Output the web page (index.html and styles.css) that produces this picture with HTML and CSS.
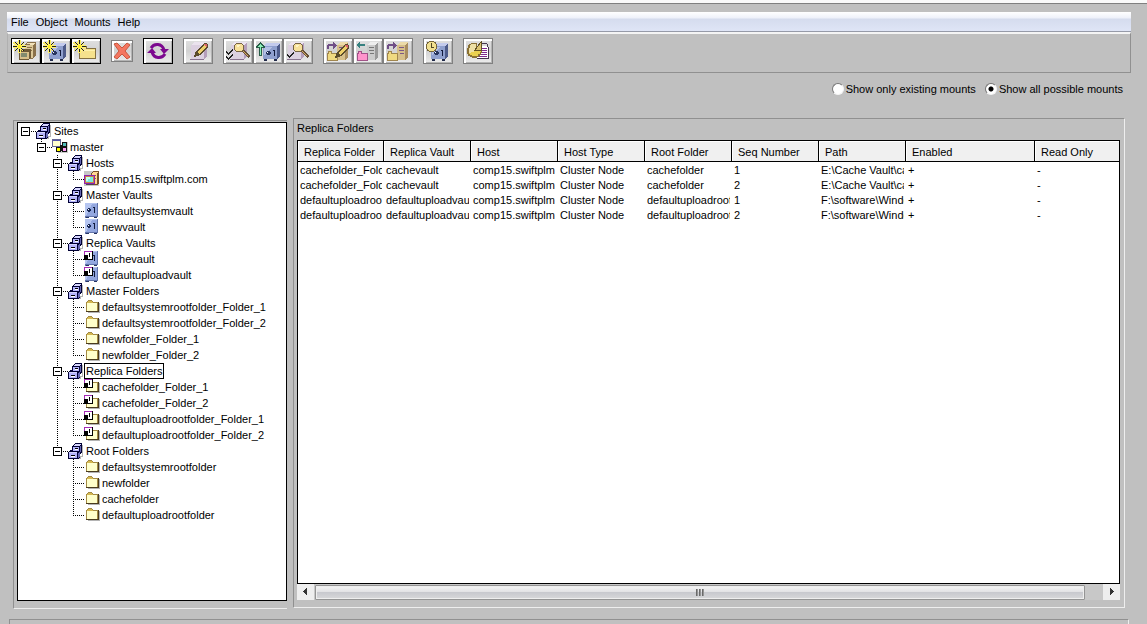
FILE: index.html
```html
<!DOCTYPE html>
<html lang="en">
<head>
<meta charset="utf-8">
<title>Sites and Mounts</title>
<link rel="stylesheet" href="styles.css">
</head>
<body>
<svg class="defs" aria-hidden="true">
  <defs>
    <symbol id="star" viewBox="0 0 13 13">
      <path d="M5 0h3v4h2v-2h1v2h-1v1h3v3h-4v1h1v1h1v1h-2v-1h-1v3h-3v-4h-1v1h-1v1h-2v-1h1v-1h1v-1h-4v-3h3v-1h-2v-2h2v1h1v1h1z" fill="#fff06a"/>
      <path d="M6 0h1v4h-1zM6 9h1v3h-1zM0 6h4v1h-4zM9 6h4v1h-4zM2 2h1v1h1v1h1v1h-1v-1h-1v-1h-1zM10 2h1v1h-1v1h-1v1h-1v-1h1v-1h1zM4 8h1v1h-1v1h-1v1h-1v-1h1v-1h1zM8 8h1v1h1v1h1v1h-1v-1h-1v-1h-1z" fill="#222"/>
      <path d="M5 5h3v3h-3z" fill="#ffee22"/>
    </symbol>
    <symbol id="safe" viewBox="0 0 17 18">
      <path d="M0 3L3 0H17L14 3Z" fill="#c3cbed"/><path d="M14 3L17 0V13L14 16Z" fill="#4d5b8a"/>
      <path d="M0 3H14V16H0Z" fill="#8fa0ce"/><path d="M1 4H9L1 13Z" fill="#b4c0e4"/>
      <path d="M1 16h3v2h-3zM11 16h3v2h-3z" fill="#222b4b"/>
      <path d="M4 8h3v1h1v2h-1v1h-3v-1h-1v-2h1z" fill="#27345d"/><path d="M4 9h1v1h-1z" fill="#fff"/>
      <path d="M10 7h2v6h-1v-5h-1z" fill="#111a3b"/>
    </symbol>
    <symbol id="bundle" viewBox="0 0 21 19">
      <path d="M10 3L13 0H21L18 3Z" fill="#ecdba9"/><path d="M10 3H18V18H10Z" fill="#d7c08b"/><path d="M18 3L21 0V15L18 18Z" fill="#a98d60"/>
      <path d="M12 5h5v1h-5zM12 8h5v1h-5zM13 11h4v1h-4z" fill="#7c5886"/>
      <path d="M0 11h1v-2h4v2h6v8h-11z" fill="#a1864e"/><path d="M1 12h9v6h-9zM2 10h2v2h-2z" fill="#f0da81"/>
    </symbol>
    <symbol id="bundle-gray" viewBox="0 0 21 19">
      <path d="M10 3L13 0H21L18 3Z" fill="#eee"/><path d="M10 3H18V18H10Z" fill="#ccc"/><path d="M18 3L21 0V15L18 18Z" fill="#999"/>
      <path d="M12 5h5v1h-5zM12 8h5v1h-5zM13 11h4v1h-4z" fill="#777"/>
      <path d="M0 11h1v-2h4v2h6v8h-11z" fill="#a15388"/><path d="M1 12h9v6h-9zM2 10h2v2h-2z" fill="#ff94cc"/>
    </symbol>
    <symbol id="arrow" viewBox="0 0 10 8"><path d="M0 3h1v-1h5v-2h1v1h1v1h1v1h1v1h-1v1h-1v1h-1v1h-1v-3h-4v3h-2z" fill="#704f87"/></symbol>
    <symbol id="lens" viewBox="0 0 17 16">
      <path d="M9 8L11 7L17 13L15 15Z" fill="#665038"/><path d="M10 8L15 13" stroke="#d7ad67" stroke-width="1"/>
      <path d="M3 0h6v1h1v1h1v5h-1v1h-1v1h-6v-1h-1v-1h-1v-5h1v-1h1z" fill="#776443"/><path d="M3 1h6v1h1v5h-1v1h-6v-1h-1v-5h1z" fill="#f8e19a"/><path d="M4 2h3v1h-1v1h-2z" fill="#fff5c8"/>
    </symbol>
    <symbol id="paper" viewBox="0 0 20 20">
      <path d="M3 4L6 1H19L16 4Z" fill="#ebe3ee"/><path d="M16 4L19 1V15L16 18Z" fill="#b59ebb"/><path d="M3 4h13v14h-13z" fill="#dcd0e0"/><path d="M2 18h14v1h-14z" fill="#89738f"/>
    </symbol>
    <symbol id="check" viewBox="0 0 7 6"><path d="M0 2h1v1h1v1h1v-1h1v-1h1v-1h1v-1h1v2h-1v1h-1v1h-1v1h-1v1h-1v-1h-1v-1h-1z" fill="#222"/></symbol>
    <symbol id="pen" viewBox="0 0 14 14"><path d="M0 14L2 8L10 0H12L14 2V4L6 12Z" fill="#5b4c2c"/><path d="M3 9L10 2L12 4L5 11Z" fill="#edcf6a"/><path d="M10 1H12L13 2V4L10 2Z" fill="#d9636a"/></symbol>

    <symbol id="cabinet" viewBox="0 0 16 16">
      <path d="M8 15h4v-2h2v-11h1v12h-2v2h-5z" fill="#b4b4b4"/>
      <path d="M4 3L7 0H14V9L12 11V14L10 16H0V9L2 7H4Z" fill="#000034"/>
      <path d="M5 3L7 1H13L11 3Z" fill="#d6d6ff"/><path d="M5 4h6v4h-6z" fill="#b4b4fb"/><path d="M12 4L13 2V8L12 9Z" fill="#6668b4"/>
      <path d="M1 9h8v1h-8z" fill="#d6d6ff"/><path d="M1 10h8v5h-8z" fill="#b4b4fb"/><path d="M10 10L12 9V13L10 15Z" fill="#6668b4"/>
      <path d="M7 5h3v1h-3zM3 12h4v1h-4z" fill="#000"/><path d="M7 6h3v1h-3zM3 13h4v1h-4z" fill="#fff"/>
    </symbol>
    <symbol id="network" viewBox="0 0 16 16">
      <path d="M6 14h10v-11h-3v1h-3v4h-4z" fill="#ccc"/>
      <path d="M0 0h9v8h-9z" fill="#666696"/><path d="M1 2h7v5h-7z" fill="#ffffce"/><path d="M1 1h7v1h-7z" fill="#5555aa"/>
      <path d="M10 3h5v5h-5zM4 8h5v5h-5zM10 8h5v5h-5zM8 6h3v6h-3z" fill="#111"/>
      <path d="M11 4h3v3h-3z" fill="#50bdb9"/><path d="M5 9h3v3h-3z" fill="#ff0"/><path d="M11 9h3v3h-3z" fill="#ff9df4"/>
    </symbol>
    <symbol id="host" viewBox="0 0 16 16">
      <path d="M0 0h15v15h-15z" fill="#c7c7c7"/><path d="M7 2l2-2h6v12l-2 2h-6z" fill="#76502a"/><path d="M8 2h5v11h-5zM9 1h5v1h-5z" fill="#ffd692"/><path d="M9 4h3v1h-3zM9 7h3v1h-3z" fill="#986c38"/>
      <path d="M0 4h11v9h-11z" fill="#8d22af"/><path d="M1 5h9v7h-9z" fill="#c98048"/><path d="M2 6h7v5h-7z" fill="#77eddf"/><path d="M2 6h4v2h-2v2h-2z" fill="#c4fff1"/><path d="M2 13h8v1h-8z" fill="#514153"/>
    </symbol>
    <symbol id="vault" viewBox="0 0 16 16">
      <path d="M1 0h13v14h-1v1h-3v-1h-6v1h-3z" fill="#6274ab"/><path d="M1 0h12v13h-12z" fill="#b5c5f0"/><path d="M8 1h5v12h-11z" fill="#93a7df"/>
      <path d="M4 5h2v1h1v2h-1v1h-2v-1h-1v-2h1z" fill="#162654"/><path d="M4 6h1v1h-1z" fill="#fff"/><path d="M9 4h2v6h-1v-5h-1z" fill="#101b3d"/><path d="M2 14h3v1h-3zM10 14h3v1h-3z" fill="#253363"/>
    </symbol>
    <symbol id="folder" viewBox="0 0 16 16">
      <path d="M4 4h12v10h-12z" fill="#b4b4b4"/><path d="M2 3h1v-1h1v-1h4v1h1v1h5v10h-12z" fill="#a38a43"/><path d="M3 4h10v8h-10z" fill="#ffffcb"/><path d="M4 2h4v1h1v1h-6v-1h1z" fill="#d5b851"/><path d="M2 12h12v-9h1v10h-13z" fill="#4a3b1e"/>
    </symbol>
    <symbol id="replica" viewBox="0 0 9 9"><path d="M0 0h9v9h-9z" fill="#000"/><path d="M0 0h8v1h-7v7h-1z" fill="#a52ab5"/><path d="M1 1h7v7h-7z" fill="#fff"/><path d="M0 4h4v4h-4zM5 2h1v4h-1z" fill="#000"/></symbol>
    <symbol id="replica-vault" viewBox="0 0 16 16"><use href="#vault" width="16" height="16"/><use href="#replica" width="9" height="9"/></symbol>
    <symbol id="replica-folder" viewBox="0 0 16 16"><use href="#folder" width="16" height="16"/><use href="#replica" width="9" height="9"/></symbol>
  </defs>
</svg>

<div class="window-edge"></div>
<header class="top">
  <nav class="menu" aria-label="Main menu">
    <button>File</button><button>Object</button><button>Mounts</button><button>Help</button>
  </nav>
  <div class="toolbar" role="toolbar" aria-label="Tools">
    <div class="group">
      <button class="tool enabled" aria-label="New host"><svg viewBox="0 0 30 26"><path d="M14 6L17 4H25V17L22 21H14Z" fill="#8a714a"/><path d="M14 7h8v13h-8z" fill="#dcc898"/><path d="M15 6L17 5H24L22 7Z" fill="#f1e1b9"/><path d="M16 9h5v1h-5zM16 12h5v1h-5z" fill="#8f7448"/><path d="M8 13L10 11H20V19L17 22H8Z" fill="#6f5a36"/><path d="M9 14h9v7h-9z" fill="#d8c08b"/><path d="M10 15h6v4h-6z" fill="#828b6e"/><use href="#star" x="2" y="2" width="13" height="13"/></svg></button>
      <button class="tool enabled" aria-label="New vault"><svg viewBox="0 0 30 26"><use href="#safe" x="8" y="5" width="17" height="18"/><use href="#star" x="2" y="2" width="13" height="13"/></svg></button>
      <button class="tool enabled" aria-label="New folder"><svg viewBox="0 0 30 26"><path d="M8 10h2v-2h6v2h9v11h-17z" fill="#857141"/><path d="M9 11h15v9h-15zM10 9h5v2h-5z" fill="#f6e28d"/><path d="M9 12h15v1h-15z" fill="#fff2ad"/><use href="#star" x="2" y="2" width="13" height="13"/></svg></button>
    </div>
    <button class="tool small" aria-label="Delete"><svg class="smooth" viewBox="0 0 22 22"><path d="M3 4L6 3L11 8L16 3L19 5L14 11L19 17L16 19L11 14L6 19L3 17L8 11Z" fill="#f47660" stroke="#c9583f"/></svg></button>
    <button class="tool enabled" aria-label="Refresh"><svg class="smooth" viewBox="0 0 30 26"><path d="M8 10C11 5 19 5 21 12M22 16C19 21 11 21 9 14" fill="none" stroke="#7c098f" stroke-width="3"/><path d="M17 11H26L21 16ZM4 15L9 10L13 15Z" fill="#7c098f"/></svg></button>
    <button class="tool" aria-label="Edit"><svg viewBox="0 0 30 26"><use href="#paper" x="5" y="3" width="20" height="20"/><use href="#pen" x="11" y="5" width="14" height="14"/></svg></button>
    <div class="group">
      <button class="tool" aria-label="Check all"><svg viewBox="0 0 30 26"><use href="#paper" x="5" y="3" width="20" height="20"/><use href="#lens" x="10" y="5" width="17" height="16"/><use href="#check" x="3" y="11" width="7" height="6"/><use href="#check" x="3" y="16" width="7" height="6"/></svg></button>
      <button class="tool" aria-label="Synchronize vault"><svg viewBox="0 0 30 26"><use href="#safe" x="10" y="5" width="17" height="18"/><path d="M7 4h1v1h1v1h1v1h1v1h1v2h-3v8h-3v-8h-3v-2h1v-1h1v-1h1v-1h1z" fill="#285c48"/><path d="M7 6h1v1h1v1h1v1h-2v8h-1v-8h-2v-1h1v-1h1z" fill="#8ff0b8"/></svg></button>
      <button class="tool" aria-label="Check selection"><svg viewBox="0 0 30 26"><use href="#paper" x="2" y="3" width="20" height="20"/><use href="#lens" x="9" y="5" width="17" height="16"/><use href="#check" x="4" y="14" width="7" height="6"/></svg></button>
    </div>
    <div class="group">
      <button class="tool" aria-label="Edit mount"><svg viewBox="0 0 30 26"><use href="#bundle" x="4" y="4" width="21" height="19"/><use href="#arrow" x="4" y="4" width="10" height="8"/><use href="#pen" x="12" y="6" width="14" height="14"/></svg></button>
      <button class="tool" aria-label="Remove mount"><svg viewBox="0 0 30 26"><use href="#bundle-gray" x="4" y="4" width="21" height="19"/><path d="M3 7h1v-1h1v-1h1v-1h1v2h5v2h-5v2h-1v-1h-1v-1h-1z" fill="#37817f"/></svg></button>
      <button class="tool" aria-label="Add mount"><svg viewBox="0 0 30 26"><use href="#bundle" x="4" y="4" width="21" height="19"/><use href="#arrow" x="4" y="4" width="10" height="8"/></svg></button>
    </div>
    <button class="tool" aria-label="Schedule"><svg viewBox="0 0 30 26"><use href="#safe" x="8" y="5" width="17" height="18"/><path d="M6 3h5v1h2v2h1v5h-1v2h-2v1h-5v-1h-2v-2h-1v-5h1v-2h2z" fill="#75653a"/><path d="M6 4h5v1h1v1h1v5h-1v1h-1v1h-5v-1h-1v-1h-1v-5h1v-1h1z" fill="#f1e08f"/><path d="M8 5h1v4h2v1h-3z" fill="#514725"/></svg></button>
    <button class="tool" aria-label="Report"><svg viewBox="0 0 30 26"><path d="M17 8h8v13h-11z" fill="#fff"/><path d="M18 5h6v1h1v3h-1v-3h-6z" fill="#46384e"/><path d="M18 10h6v1h-6zM18 12h6v1h-6zM17 14h7v1h-7zM16 16h8v1h-8zM15 18h9v1h-9z" fill="#7f2b8d"/><path d="M25 9h1v12h-12v-1h11z" fill="#45344e"/><path d="M8 5h6v8h5v2h-1v2h-1v1h-1v1h-2v1h-5v-1h-2v-1h-2v-2h-1v-6h1v-3h1v-1h2z" fill="#8a7135"/><path d="M8 6h5v7h5v1h-1v2h-2v2h-6v-1h-2v-1h-1v-6h1v-2h1z" fill="#ead04f"/><path d="M8 6h5v7l-7 2v-5h1v-3h1z" fill="#eee0a6"/><path d="M12 12L18 4V12Z" fill="#dbc471" stroke="#625125"/></svg></button>
  </div>
</header>

<div class="filters" role="radiogroup" aria-label="Mount filter">
  <label><input type="radio" name="mounts">Show only existing mounts</label>
  <label><input type="radio" name="mounts" checked>Show all possible mounts</label>
</div>

<main class="main">
  <section class="tree-panel" aria-label="Sites">
    <div class="tree">
      <ul class="root">
        <li>
          <div class="node"><button class="toggle" aria-label="Collapse Sites"></button><svg><use href="#cabinet"/></svg><span>Sites</span></div>
          <ul>
            <li>
              <div class="node"><button class="toggle" aria-label="Collapse master"></button><svg><use href="#network"/></svg><span>master</span></div>
              <ul>
                <li>
                  <div class="node"><button class="toggle" aria-label="Collapse Hosts"></button><svg><use href="#cabinet"/></svg><span>Hosts</span></div>
                  <ul>
                    <li class="leaf"><svg><use href="#host"/></svg><span>comp15.swiftplm.com</span></li>
                  </ul>
                </li>
                <li>
                  <div class="node"><button class="toggle" aria-label="Collapse Master Vaults"></button><svg><use href="#cabinet"/></svg><span>Master Vaults</span></div>
                  <ul>
                    <li class="leaf"><svg><use href="#vault"/></svg><span>defaultsystemvault</span></li>
                    <li class="leaf"><svg><use href="#vault"/></svg><span>newvault</span></li>
                  </ul>
                </li>
                <li>
                  <div class="node"><button class="toggle" aria-label="Collapse Replica Vaults"></button><svg><use href="#cabinet"/></svg><span>Replica Vaults</span></div>
                  <ul>
                    <li class="leaf"><svg><use href="#replica-vault"/></svg><span>cachevault</span></li>
                    <li class="leaf"><svg><use href="#replica-vault"/></svg><span>defaultuploadvault</span></li>
                  </ul>
                </li>
                <li>
                  <div class="node"><button class="toggle" aria-label="Collapse Master Folders"></button><svg><use href="#cabinet"/></svg><span>Master Folders</span></div>
                  <ul>
                    <li class="leaf"><svg><use href="#folder"/></svg><span>defaultsystemrootfolder_Folder_1</span></li>
                    <li class="leaf"><svg><use href="#folder"/></svg><span>defaultsystemrootfolder_Folder_2</span></li>
                    <li class="leaf"><svg><use href="#folder"/></svg><span>newfolder_Folder_1</span></li>
                    <li class="leaf"><svg><use href="#folder"/></svg><span>newfolder_Folder_2</span></li>
                  </ul>
                </li>
                <li>
                  <div class="node"><button class="toggle" aria-label="Collapse Replica Folders"></button><svg><use href="#cabinet"/></svg><span class="selected">Replica Folders</span></div>
                  <ul>
                    <li class="leaf"><svg><use href="#replica-folder"/></svg><span>cachefolder_Folder_1</span></li>
                    <li class="leaf"><svg><use href="#replica-folder"/></svg><span>cachefolder_Folder_2</span></li>
                    <li class="leaf"><svg><use href="#replica-folder"/></svg><span>defaultuploadrootfolder_Folder_1</span></li>
                    <li class="leaf"><svg><use href="#replica-folder"/></svg><span>defaultuploadrootfolder_Folder_2</span></li>
                  </ul>
                </li>
                <li>
                  <div class="node"><button class="toggle" aria-label="Collapse Root Folders"></button><svg><use href="#cabinet"/></svg><span>Root Folders</span></div>
                  <ul>
                    <li class="leaf"><svg><use href="#folder"/></svg><span>defaultsystemrootfolder</span></li>
                    <li class="leaf"><svg><use href="#folder"/></svg><span>newfolder</span></li>
                    <li class="leaf"><svg><use href="#folder"/></svg><span>cachefolder</span></li>
                    <li class="leaf"><svg><use href="#folder"/></svg><span>defaultuploadrootfolder</span></li>
                  </ul>
                </li>
              </ul>
            </li>
          </ul>
        </li>
      </ul>
    </div>
  </section>

  <section class="list-panel">
    <h1>Replica Folders</h1>
    <div class="table-box">
      <table>
        <colgroup><col class="first"><col class="mid"><col class="mid"><col class="mid"><col class="mid"><col class="mid"><col class="mid"><col><col class="last"></colgroup>
        <thead>
          <tr><th>Replica Folder</th><th>Replica Vault</th><th>Host</th><th>Host Type</th><th>Root Folder</th><th>Seq Number</th><th>Path</th><th>Enabled</th><th>Read Only</th></tr>
        </thead>
        <tbody>
          <tr><td>cachefolder_Folder_1</td><td>cachevault</td><td>comp15.swiftplm</td><td>Cluster Node</td><td>cachefolder</td><td>1</td><td>E:\Cache Vault\ca</td><td>+</td><td>-</td></tr>
          <tr><td>cachefolder_Folder_2</td><td>cachevault</td><td>comp15.swiftplm</td><td>Cluster Node</td><td>cachefolder</td><td>2</td><td>E:\Cache Vault\ca</td><td>+</td><td>-</td></tr>
          <tr><td>defaultuploadroot</td><td>defaultuploadvault</td><td>comp15.swiftplm</td><td>Cluster Node</td><td>defaultuploadroot</td><td>1</td><td>F:\software\Windc</td><td>+</td><td>-</td></tr>
          <tr><td>defaultuploadroot</td><td>defaultuploadvault</td><td>comp15.swiftplm</td><td>Cluster Node</td><td>defaultuploadroot</td><td>2</td><td>F:\software\Windc</td><td>+</td><td>-</td></tr>
        </tbody>
      </table>
    </div>
    <div class="scrollbar">
      <button class="step" aria-label="Scroll left"><svg viewBox="0 0 16 16"><path d="M6 7h1v-1h1v-1h1v-1h1v7h-1v-1h-1v-1h-1v-1h-1z" fill="#333"/></svg></button>
      <div class="track"><div class="thumb"><i></i><i></i><i></i></div></div>
      <button class="step" aria-label="Scroll right"><svg viewBox="0 0 16 16"><path d="M7 4h1v1h1v1h1v1h1v1h-1v1h-1v1h-1v1h-1z" fill="#333"/></svg></button>
    </div>
  </section>
</main>
<footer class="status"></footer>
</body>
</html>
```
FILE: styles.css
```css
* { box-sizing: border-box; }

body {
  margin: 0;
  height: 100vh;
  display: flex;
  flex-direction: column;
  overflow: hidden;
  background: #c0c0c0;
  color: #000;
  font: 11px/16px "Liberation Sans", Arial, sans-serif;
}

button {
  border: 0;
  padding: 0;
  background: none;
  color: inherit;
  font: inherit;
}

svg { display: block; shape-rendering: crispEdges; }
.smooth { shape-rendering: auto; }
.defs { width: 0; height: 0; flex: none; }

.window-edge {
  flex: none;
  height: 4px;
  background: #fafafa;
  border-bottom: 1px solid #808080;
}

.top { flex: none; margin: 8px 16px 0 7px; }

.menu {
  display: flex;
  gap: 7px;
  height: 20px;
  padding: 2px 4px 1px;
  background: linear-gradient(#fff 0, #eef1fa 6px, #d5dcee 7px, #dfe5f6 19px);
  border-bottom: 1px solid #969aa8;
}

.toolbar {
  display: flex;
  align-items: center;
  gap: 10px;
  height: 41px;
  padding: 3px 4px 8px 3px;
  border: 1px solid #909090;
  border-top: 2px solid #f4f4f4;
  border-left-color: #b0b0b0;
}

.group { display: flex; }

.tool {
  width: 30px;
  height: 26px;
  background: linear-gradient(#e2e2e2, #d2d2d2 50%, #efefef);
  box-shadow: inset 0 0 0 1px #808080, inset 2px 2px 0 1px #fff, inset -1px -1px 0 1px #b4b4b4;
}
.tool.enabled {
  box-shadow: inset 0 0 0 1px #000, inset 2px 2px 0 1px #fff, inset -1px -1px 0 1px #b4b4b4;
}
.tool svg { width: 100%; height: 100%; }
.tool.small { width: 22px; height: 22px; }

.filters {
  flex: none;
  display: flex;
  justify-content: flex-end;
  gap: 9px;
  margin: 8px 24px 0 0;
}
.filters label { display: flex; align-items: center; gap: 2px; }
.filters input {
  appearance: none;
  width: 12px;
  height: 12px;
  margin: 0;
  border: 1px solid;
  border-color: #777 #f4f4f4 #f4f4f4 #777;
  border-radius: 50%;
  background: #fff;
}
.filters input:checked { background: radial-gradient(circle, #000 2px, #fff 3px); }

.main {
  flex: 1;
  min-height: 0;
  display: flex;
  gap: 6px;
  padding: 21px 22px 0 13px;
}

.tree-panel {
  flex: none;
  width: 274px;
  margin-top: 2px;
  padding: 1px 0 7px 3px;
  border: 1px solid #909090;
  border-right: 0;
  border-bottom-color: #eee;
}
.tree {
  height: 100%;
  border: 1px solid #000;
  background: #fff;
  overflow: hidden;
}

.tree ul { margin: 0; padding: 0 0 0 16px; list-style: none; }
.tree .root { padding-left: 3px; }

.tree li {
  background:
    repeating-linear-gradient(#000 0 1px, transparent 1px 2px) 4px 0 / 1px 100% no-repeat,
    repeating-linear-gradient(90deg, #000 0 1px, transparent 1px 2px) 4px 8px / 12px 1px no-repeat;
}
.tree li:last-child { background-size: 1px 8px, 12px 1px; }
.tree .root > li { background-size: 0 0, 12px 1px; }

.node { display: flex; align-items: center; height: 16px; }
.leaf { display: flex; height: 16px; padding-left: 15px; }
.tree svg { flex: none; width: 16px; height: 16px; }
.tree span {
  height: 16px;
  padding: 0 1px 0 1px;
  border: 1px solid transparent;
  line-height: 14px;
  white-space: nowrap;
}
.tree .selected { border-color: #000; }

.toggle {
  flex: none;
  width: 9px;
  height: 9px;
  margin-right: 6px;
  border: 1px solid #000;
  background: linear-gradient(#000, #000) center / 5px 1px no-repeat #fff;
}

.list-panel {
  flex: 1;
  min-width: 0;
  display: flex;
  flex-direction: column;
  margin-bottom: 1px;
  padding: 0 4px 7px 3px;
  border: 1px solid #909090;
  border-right-color: #eee;
  border-bottom-color: #eee;
}
.list-panel h1 {
  margin: 0;
  padding: 1px 0 4px;
  font: inherit;
}

.table-box {
  flex: 1;
  min-height: 0;
  border: 1px solid #000;
  background: #fff;
  overflow: hidden;
}

table {
  width: 100%;
  table-layout: fixed;
  border-collapse: separate;
  border-spacing: 0;
}
.first { width: 86px; }
.mid { width: 87px; }
.last { width: 84px; }

th {
  height: 21px;
  padding: 2px 0 0 6px;
  border-right: 1px solid #000;
  border-bottom: 1px solid #000;
  background: #f0f0f0;
  box-shadow: inset 1px 1px 0 #fff;
  font-weight: normal;
  text-align: left;
  white-space: nowrap;
}
th:last-child { border-right: 0; }

td {
  height: 15px;
  padding: 0 0 0 2px;
  border-right: 2px solid transparent;
  line-height: 15px;
  white-space: nowrap;
  overflow: hidden;
}
tbody tr:first-child td { height: 16px; padding-top: 1px; }

.scrollbar { flex: none; display: flex; height: 16px; background: #c8c8c8; }
.step { width: 17px; background: #eee; }
.step svg { width: 16px; height: 16px; }
.track { flex: 1; padding: 1px 18px 0 1px; }
.thumb {
  display: flex;
  justify-content: center;
  align-items: center;
  gap: 1px;
  height: 15px;
  border: 1px solid #949494;
  border-radius: 1px;
  background: linear-gradient(#f6f6f6, #e2e2e4 45%, #c8c9ce 50%, #d8d8da);
  box-shadow: inset 0 0 0 1px #eee;
}
.thumb i { width: 2px; height: 7px; background: linear-gradient(90deg, #555, #aaa); }

.status {
  flex: none;
  height: 5px;
  margin: 10px 18px 0 9px;
  border: solid #909090;
  border-width: 1px 1px 0;
  border-right-color: #eee;
}
```
